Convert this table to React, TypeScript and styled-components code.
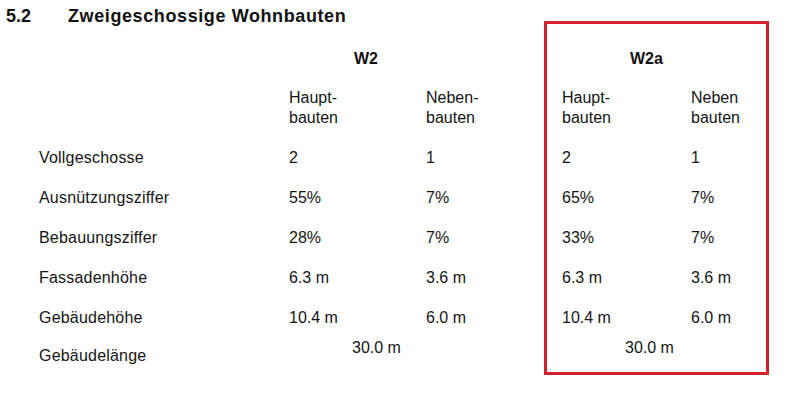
import React from "react";
import styled, { createGlobalStyle } from "styled-components";

const GlobalStyle = createGlobalStyle`
  html, body {
    margin: 0;
    padding: 0;
    background: #ffffff;
  }
  body {
    width: 800px;
    height: 408px;
    overflow: hidden;
    font-family: "Liberation Sans", Arial, sans-serif;
    color: #151515;
  }
`;

const Page = styled.div`
  display: flex;
  align-items: flex-start;
  width: 800px;
  height: 408px;
`;

const LeftSection = styled.section`
  display: flex;
  flex-direction: column;
  padding: 5px 0 0 6px;
`;

const Title = styled.h1`
  display: flex;
  margin: 0;
  font-size: 18px;
  line-height: 22px;
  font-weight: 700;
  letter-spacing: 0.6px;
  color: #111;
`;

const SectionNumber = styled.span`
  width: 62px;
  letter-spacing: 0;
`;

const ZoneGrid = styled.div<{ $columns: string }>`
  display: grid;
  grid-template-columns: ${(p) => p.$columns};
  font-size: 16px;
  line-height: 20px;
`;

const LeftGrid = styled(ZoneGrid)`
  margin: 22px 0 0 33px;
`;

const HighlightBox = styled.section`
  margin-top: 21px;
  width: 225px;
  box-sizing: border-box;
  border: 3px solid #d3222b;
  padding: 25px 0 14px 15px;
`;

const Blank = styled.div<{ $height: number }>`
  height: ${(p) => p.$height}px;
`;

const ZoneHeader = styled.div<{ $indent: number }>`
  grid-column: span 2;
  padding: 0 0 19px ${(p) => p.$indent}px;
  font-weight: 700;
  color: #111;
`;

const SubHeader = styled.div`
  padding-bottom: 20px;
`;

const Label = styled.div<{ $short?: boolean }>`
  height: ${(p) => (p.$short ? 30 : 40)}px;
  letter-spacing: 0.2px;
`;

const Value = styled.div<{ $short?: boolean }>`
  height: ${(p) => (p.$short ? 30 : 40)}px;
`;

const TotalLabel = styled.div`
  padding-top: 8px;
  letter-spacing: 0.2px;
`;

const TotalValue = styled.div`
  grid-column: span 2;
  padding-left: 63px;
`;

type Row = { label: string; values: [string, string, string, string] };

const rows: Row[] = [
  { label: "Vollgeschosse", values: ["2", "1", "2", "1"] },
  { label: "Ausnützungsziffer", values: ["55%", "7%", "65%", "7%"] },
  { label: "Bebauungsziffer", values: ["28%", "7%", "33%", "7%"] },
  { label: "Fassadenhöhe", values: ["6.3 m", "3.6 m", "6.3 m", "3.6 m"] },
  { label: "Gebäudehöhe", values: ["10.4 m", "6.0 m", "10.4 m", "6.0 m"] },
];

export default function App() {
  const lastIndex = rows.length - 1;
  return (
    <>
      <GlobalStyle />
      <Page>
        <LeftSection>
          <Title>
            <SectionNumber>5.2</SectionNumber>
            Zweigeschossige Wohnbauten
          </Title>
          <LeftGrid $columns="250px 137px 118px">
            <Blank $height={39} />
            <ZoneHeader $indent={65}>W2</ZoneHeader>
            <Blank $height={60} />
            <SubHeader>
              Haupt-
              <br />
              bauten
            </SubHeader>
            <SubHeader>
              Neben-
              <br />
              bauten
            </SubHeader>
            {rows.map((r, i) => (
              <React.Fragment key={r.label}>
                <Label $short={i === lastIndex}>{r.label}</Label>
                <Value $short={i === lastIndex}>{r.values[0]}</Value>
                <Value $short={i === lastIndex}>{r.values[1]}</Value>
              </React.Fragment>
            ))}
            <TotalLabel>Gebäudelänge</TotalLabel>
            <TotalValue>30.0 m</TotalValue>
          </LeftGrid>
        </LeftSection>
        <HighlightBox>
          <ZoneGrid $columns="129px 1fr">
            <ZoneHeader $indent={68}>W2a</ZoneHeader>
            <SubHeader>
              Haupt-
              <br />
              bauten
            </SubHeader>
            <SubHeader>
              Neben
              <br />
              bauten
            </SubHeader>
            {rows.map((r, i) => (
              <React.Fragment key={r.label}>
                <Value $short={i === lastIndex}>{r.values[2]}</Value>
                <Value $short={i === lastIndex}>{r.values[3]}</Value>
              </React.Fragment>
            ))}
            <TotalValue>30.0 m</TotalValue>
          </ZoneGrid>
        </HighlightBox>
      </Page>
    </>
  );
}
